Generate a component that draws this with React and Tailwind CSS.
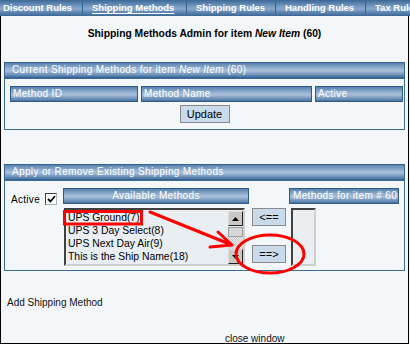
import React from 'react';

const TABS = [
  { label: 'Discount Rules', w: 'w-[82px]', pl: 'pl-[3px]' },
  { label: 'Shipping Methods', w: 'w-[103px]', pl: 'pl-[9px]', active: true },
  { label: 'Shipping Rules', w: 'w-[88px]', pl: 'pl-[9px]' },
  { label: 'Handling Rules', w: 'w-[89px]', pl: 'pl-[9px]' },
  { label: 'Tax Rules', w: 'w-[44px]', pl: 'pl-[9px]' },
];

const METHODS = ['UPS Ground(7)', 'UPS 3 Day Select(8)', 'UPS Next Day Air(9)', 'This is the Ship Name(18)'];

function TabBar() {
  return (
    <div className="flex h-[16px] w-[410px] overflow-hidden bg-[linear-gradient(to_bottom,#3b6896,#6f94bd_35%,#8aa9cc_55%,#6289b4_75%,#3a6694)]">
      {TABS.map((t, i) => (
        <div key={t.label} className="flex shrink-0">
          {i > 0 && <div className="w-[1px] my-[2px] bg-[#c4d4e6] border-r border-[#34608c]" />}
          <div className={`${t.w} ${t.pl} shrink-0 whitespace-nowrap text-white font-bold text-[9.5px] leading-[16px]`}>
            <span className={t.active ? 'underline underline-offset-[2px]' : ''}>{t.label}</span>
          </div>
        </div>
      ))}
    </div>
  );
}

function SectionBar({ children }) {
  return (
    <div className="h-[16px] border border-[#36628f] bg-[linear-gradient(to_bottom,#5a82ad,#8fadcf_35%,#a9c0da_55%,#7f9fc4_75%,#4a73a0)] text-white text-[10px] leading-[14px] pl-[7px] tracking-[0.35px] whitespace-nowrap">
      {children}
    </div>
  );
}

function HeadCell({ className = '', children }) {
  return (
    <div className={`h-[16px] border border-[#2e5a88] bg-[linear-gradient(to_bottom,#5a82ad,#8fadcf_35%,#a9c0da_55%,#7f9fc4_75%,#4a73a0)] text-white text-[10px] leading-[14px] tracking-[0.35px] whitespace-nowrap ${className}`}>
      {children}
    </div>
  );
}

function Btn({ children, className = '' }) {
  return (
    <div className={`h-[18px] border border-[#8a8a8a] bg-[#c9dbeb] text-[11px] leading-[16px] text-center text-black ${className}`}>
      {children}
    </div>
  );
}

function ScrollBtn({ up }) {
  return (
    <div className="h-[15px] w-[15px] border border-t-[#dcdcdc] border-l-[#dcdcdc] border-r-[#202020] border-b-[#202020] bg-[#c8c8c8] flex items-center justify-center">
      <svg width="7" height="4" viewBox="0 0 7 4">
        {up ? <path d="M0 4 L3.5 0 L7 4 Z" fill="#000" /> : <path d="M0 0 L3.5 4 L7 0 Z" fill="#000" />}
      </svg>
    </div>
  );
}

export default function App() {
  return (
    <div className="relative w-[410px] h-[344px] bg-[#f3f7fa] font-['Liberation_Sans',Arial,sans-serif]">
      <TabBar />
      <div className="w-[409px] h-[328px] border-l border-r border-b border-black flex flex-col">
        <h1 className="mt-[12px] text-center text-[10.3px] font-bold leading-[12px] text-black">
          Shipping Methods Admin for item <i>New Item</i> (60)
        </h1>

        {/* current methods */}
        <div className="mt-[22px] ml-[3px] w-[401px]">
          <SectionBar>
            Current Shipping Methods for item <i>New Item</i> (60)
          </SectionBar>
          <div className="border border-[#3d6c99] h-[52px] pt-[7px] pl-[5px]">
            <div className="flex gap-[3px]">
              <HeadCell className="w-[128px] pl-[2px]">Method ID</HeadCell>
              <HeadCell className="w-[171px] pl-[2px]">Method Name</HeadCell>
              <HeadCell className="w-[88px] pl-[2px]">Active</HeadCell>
            </div>
            <div className="flex justify-center mt-[3px] pr-[5px]">
              <Btn className="w-[50px]">Update</Btn>
            </div>
          </div>
        </div>

        {/* apply / remove */}
        <div className="mt-[34px] ml-[3px] w-[401px]">
          <SectionBar>Apply or Remove Existing Shipping Methods</SectionBar>
          <div className="border border-[#3d6c99] h-[91px] pt-[7px] pl-[6px] flex">
            <div className="w-[52px] shrink-0 flex items-start pt-[5px]">
              <span className="text-[10px] leading-[14px] tracking-[0.3px] text-black">Active</span>
              <div className="ml-[5px] w-[12px] h-[12px] border border-t-[#404040] border-l-[#404040] border-r-[#b0b0b0] border-b-[#b0b0b0] bg-white flex items-center justify-center">
                <svg width="9" height="8" viewBox="0 0 9 8">
                  <path d="M1 4 L3.5 6.5 L8 1" stroke="#000" strokeWidth="1.8" fill="none" />
                </svg>
              </div>
            </div>

            <div className="w-[186px] shrink-0">
              <HeadCell className="h-[15px] text-center leading-[13px] tracking-[0.6px]">Available Methods</HeadCell>
              <div className="mt-[4px] ml-[1px] w-[181px] h-[58px] border-2 border-t-[#404040] border-l-[#404040] border-r-[#d0d0d0] border-b-[#d0d0d0] bg-[#e9eef3] flex">
                <div className="flex-1 pt-[1px] pl-[2px]">
                  {METHODS.map((m) => (
                    <div key={m} className="text-[10.4px] leading-[13px] text-black whitespace-nowrap">{m}</div>
                  ))}
                </div>
                <div className="w-[15px] flex flex-col pt-[1px]">
                  <ScrollBtn up />
                  <div className="h-[10px] mt-[1px] border border-[#9a9a9a] bg-[#d6d6d6]" />
                  <div className="flex-1 bg-[repeating-conic-gradient(#c4c4c4_0_25%,#ececec_0_50%)] bg-[length:2px_2px]" />
                  <ScrollBtn />
                </div>
              </div>
            </div>

            <div className="w-[34px] ml-[3px] shrink-0 pt-[20px]">
              <Btn>&lt;==</Btn>
              <Btn className="mt-[19px]">==&gt;</Btn>
            </div>

            <div className="w-[110px] ml-[3px] shrink-0">
              <HeadCell className="h-[15px] pl-[3px] leading-[13px] tracking-[0.2px]">Methods for item # 60</HeadCell>
              <div className="mt-[4px] ml-[2px] w-[25px] h-[58px] border-2 border-t-[#404040] border-l-[#404040] border-r-[#d0d0d0] border-b-[#d0d0d0] bg-[#e9eef3]" />
            </div>
          </div>
        </div>

        <div className="mt-[26px] pl-[6px] text-[10px] leading-[12px] text-[#111]">Add Shipping Method</div>
        <div className="mt-[24px] pl-[224px] text-[10px] leading-[12px] text-[#111]">close window</div>
      </div>

      <svg className="absolute inset-0 pointer-events-none" width="410" height="344">
        <rect x="64.5" y="211.5" width="77" height="12.5" fill="none" stroke="#f00" strokeWidth="3" />
        <path d="M150 212 L232 245 M218 232 L232 245 L210 247" fill="none" stroke="#f00" strokeWidth="3" strokeLinecap="round" strokeLinejoin="round" />
        <ellipse cx="270" cy="254" rx="34" ry="19" fill="none" stroke="#f00" strokeWidth="3" />
      </svg>
    </div>
  );
}
